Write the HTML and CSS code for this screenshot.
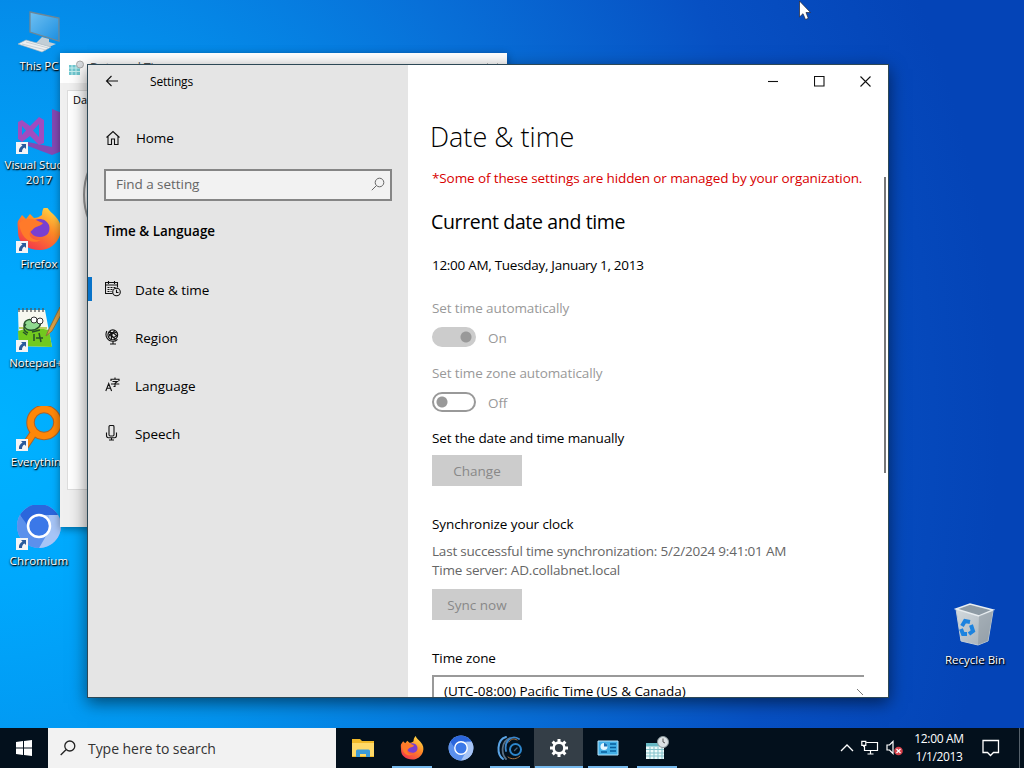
FILE: index.html
```html
<!DOCTYPE html>
<html lang="en">
<head>
<meta charset="utf-8">
<title>Settings</title>
<link rel="stylesheet" href="styles.css">
</head>
<body>
<svg class="defs" width="0" height="0">
  <defs>
    <linearGradient id="fox" x1="0.8" y1="0" x2="0.2" y2="1"><stop offset="0" stop-color="#ffe14a"/><stop offset=".45" stop-color="#ff8a26"/><stop offset="1" stop-color="#f2304e"/></linearGradient>
    <linearGradient id="screen" x1="0" y1="0" x2="1" y2="1"><stop offset="0" stop-color="#6fc0f2"/><stop offset="1" stop-color="#1c8fe0"/></linearGradient>
    <linearGradient id="bin" x1="0" y1="0" x2="1" y2="1"><stop offset="0" stop-color="#d3dade"/><stop offset="1" stop-color="#a3adb6"/></linearGradient>
    <symbol id="shortcut" viewBox="0 0 12 12"><path d="M0 0h12v12H0z" fill="#f4f4f6"/><path d="M5 2h5v5L8.500 5.500C6.500 6.500 6 8 6 10H3C2.500 7 4 5 6.500 3.500z" fill="#2a5a9c"/></symbol>
    <symbol id="firefox" viewBox="0 0 46 46">
      <path d="M2 16 6 10l4 4 4-5 4 4c3 0 5-1 8-3 0-4 1-7 4-10 2 5 5 7 9 11 6 6 7 13 5 19-3 9-11 15-20 15C11 45 2 38 2 27c0-5-1-8 0-11z" fill="url(#fox)"/>
      <path d="M16 17c5-5 14-4 17 3 2 7-2 12-9 12-7 0-11-5-10-9l5-2z" fill="#7a3fd0"/>
      <path d="M3 18c5-4 11-5 17-3 2 1 4 2 7 3-2 3-5 3-7 4-3 1-3 3-6 5-2 5 4 9 11 8-9 5-20 0-22-17z" fill="#ff7a2a"/>
    </symbol>
    <symbol id="chromium" viewBox="0 0 46 46">
      <circle cx="23" cy="23" r="22" fill="#8ab2f4"/>
      <path d="M4 12A22 22 0 0 1 42 12H23L13 28z" fill="#2b66dc"/>
      <path d="M42 12A22 22 0 0 1 23 45L33 28V12z" fill="#a6c4f6"/>
      <path d="M4 12A22 22 0 0 0 23 45l8-14-16-4z" fill="#5b90ec"/>
      <circle cx="23" cy="23" r="11" fill="#3b78e8" stroke="#fff" stroke-width="2.500"/>
    </symbol>
  </defs>
</svg>
<main class="desktop">
  <div class="icons">
    <div class="shortcut">
      <svg width="46" height="46" viewBox="0 0 46 46"><path d="m14 2 29 6v23L14 22z" fill="url(#screen)" stroke="#6d8797" stroke-width="1.300"/><path d="m26 27 7 2v3l7 2-7 3-13-4z" fill="#c2ced6"/><path d="m2 34 8-4 25 7-9 5z" fill="#eceff1" stroke="#a8b3bb" stroke-width=".6"/><path d="m6 34 24 6M10 32l22 6" stroke="#b9c3ca" stroke-width=".7"/></svg>
      <span>This PC</span>
    </div>
    <div class="shortcut">
      <svg width="46" height="46" viewBox="0 0 46 46"><path d="m36 0 10 4v38l-10 4-24-9v-4l24 5z" fill="#8449b4"/><path d="m2 13 4-2 8 6 9-9 5 3v23l-5 2-9-9-8 6-4-3zm4 4v9l4-4.500zm17-2-6 6.500 6 6.500z" fill="#a04cc0" fill-rule="evenodd"/><use href="#shortcut" y="33" width="12" height="12"/></svg>
      <span>Visual Studio<br>2017</span>
    </div>
    <div class="shortcut">
      <svg width="46" height="46" viewBox="0 0 46 46"><use href="#firefox" y="-3" width="46" height="46"/><use href="#shortcut" y="33" width="12" height="12"/></svg>
      <span>Firefox</span>
    </div>
    <div class="shortcut">
      <svg width="46" height="46" viewBox="0 0 46 46"><path d="M2 3h27l7 37-33-1z" fill="#f7f8ef"/><path d="M2 24c10-3 20-3 31-1l3 17-33-1z" fill="#72c91f"/><path d="M3 21h28" stroke="#b9d15e" stroke-width="2"/><path d="M3 1v4m4-4v4m4-4v4m4-4v4m4-4v4m4-4v4m4-4v4" stroke="#555" stroke-width="1.300"/><path d="M44 0 33 22l-3 7 6-5L46 6z" fill="#d9a045" stroke="#8b7140"/><path d="M8 19c0-7 7-8 10-4 5-3 8 2 5 5-4 4-12 5-15-1z" fill="#8fd98f" stroke="#27522a" stroke-width="1.500"/><path d="M12 26c-5-2-5-6-2-9m6 8 8-2m-6 4v7m5-8 2 9m-5-4h7m-20-6 4 3" fill="none" stroke="#27522a" stroke-width="1.500"/><circle cx="18" cy="13" r="3" fill="#fff" stroke="#333"/><circle cx="24" cy="14" r="3" fill="#fff" stroke="#333"/><use href="#shortcut" y="33" width="12" height="12"/></svg>
      <span>Notepad++</span>
    </div>
    <div class="shortcut">
      <svg width="46" height="46" viewBox="0 0 46 46"><g fill="none"><path d="M17 28 9 40" stroke="#a9632c" stroke-width="8"/><circle cx="28" cy="16.500" r="13.500" stroke="#a9632c" stroke-width="8.500"/><path d="M17 28 9 40" stroke="#ff8708" stroke-width="6"/><circle cx="28" cy="16.500" r="13.500" stroke="#ff8708" stroke-width="6.500"/></g><use href="#shortcut" y="33" width="12" height="12"/></svg>
      <span>Everything</span>
    </div>
    <div class="shortcut">
      <svg width="46" height="46" viewBox="0 0 46 46"><use href="#chromium" y="-2" width="46" height="46"/><use href="#shortcut" y="33" width="12" height="12"/></svg>
      <span class="wide">Chromium</span>
    </div>
  </div>
  <div class="shortcut recycle">
    <svg width="46" height="46" viewBox="0 0 46 46"><path d="M4 7 41 9l-5 30-10 4-17-4z" fill="url(#bin)" stroke="#c3ced6"/><path d="m4 7 14-5 23 6-14 6z" fill="#8e9ba5" stroke="#e8edf0" stroke-width="1.500"/><path d="m27 14 14-5-5 30-10 4z" fill="#7b8792" opacity=".4"/><g fill="none" stroke="#1d83df" stroke-width="4"><path d="m10 24 3-5 5 1"/><path d="m19 23 2 6-4 3"/><path d="M15 32h-4l-2-5"/></g></svg>
    <span>Recycle Bin</span>
  </div>

  <section class="back-window">
    <header><svg width="16" height="16" viewBox="0 0 16 16"><path d="M1 5h11v10H1z" fill="#6fc6cf"/><path d="M1 8h11M1 11.500h11M4 5v10m4-10v10" stroke="#c5eeee"/><circle cx="12" cy="4.500" r="3.500" fill="#d8dce0" stroke="#aaa"/></svg><b>Date and Time</b><svg class="x" width="11" height="11" viewBox="0 0 11 11"><path d="m.5.500 10 10m0-10-10 10" stroke="#777"/></svg></header>
    <div class="sheet"><span>Date and Time</span><div class="dial"></div></div>
  </section>

  <section class="settings">
    <aside>
      <div class="titlebar">
        <svg width="14" height="12" viewBox="0 0 14 12"><path d="M13 6H1.500M6.500 1l-5 5 5 5" class="line"/></svg>
        <span>Settings</span>
      </div>
      <div class="home">
        <svg width="16" height="16" viewBox="0 0 16 16"><path d="m1.500 7.500 6.500-6 6.500 6M3 6.500v8h3.500V9h3v5.500H13v-8" class="line"/></svg>
        <span>Home</span>
      </div>
      <div class="find"><span>Find a setting</span><svg width="14" height="14" viewBox="0 0 14 14"><circle cx="8.500" cy="5.500" r="4.300" fill="none" stroke="#666"/><path d="M5.500 8.500.8 13.200" stroke="#666"/></svg></div>
      <h3>Time &amp; Language</h3>
      <nav>
        <a class="active"><svg width="16" height="16" viewBox="0 0 16 16"><path d="M7.500 12.500H.5v-11h12v5M.5 4h12M3.500 0v3m6-3v3" class="line"/><path d="M2.500 6.500h2m1 0h2m1 0h2m-8 2h2m1 0h2m-5 2h2m1 0h1" class="line"/><circle cx="11.500" cy="11" r="3.800" class="line"/><path d="M11.500 8.800v2.700h2" class="line"/></svg><span>Date &amp; time</span></a>
        <a><svg width="16" height="16" viewBox="0 0 16 16"><circle cx="7.800" cy="5.800" r="4.900" class="line"/><path d="M3.500 4.500c4 5 6 5 9 1M3.500 8c2-4 5-6 8.500-4M5 2c1 4 3 7 6 8M10 1.500C7 4 6 7 6.500 10M4 3.500c3-.5 6 1 8 4M1.800 2C-.5 7 2.500 12.300 8 12.300c2 0 3.500-.8 4.500-2M8 12.300v2.400M5 15h6" class="line"/></svg><span>Region</span></a>
        <a><svg width="16" height="16" viewBox="0 0 16 16"><path d="m.8 14 2.900-7.500 2.900 7.500M1.800 11.300h4M6 4V2.300h8V4M10 .5v1.800M7.500 4.500h4.800L10 6.300v3.200H8.500M6 7h8.300" class="line"/></svg><span>Language</span></a>
        <a><svg width="16" height="16" viewBox="0 0 16 16"><rect x="4" y=".5" width="5" height="10.500" rx="1.200" class="line"/><path d="M1.500 7.500v3q0 2.200 2 2.200h6q2 0 2-2.200v-3M6.500 12.700v2.300M4 15h5" class="line"/></svg><span>Speech</span></a>
      </nav>
    </aside>
    <article>
      <div class="controls">
        <svg width="11" height="11" viewBox="0 0 11 11"><path d="M0 5.500h10" class="line"/></svg>
        <svg width="11" height="11" viewBox="0 0 11 11"><path d="M.5.500h9.500v9.500H.5z" class="line"/></svg>
        <svg width="11" height="11" viewBox="0 0 11 11"><path d="m.5.500 10 10m0-10-10 10" class="line"/></svg>
      </div>
      <h1>Date &amp; time</h1>
      <p class="warning">*Some of these settings are hidden or managed by your organization.</p>
      <div class="view">
        <div class="fields">
          <h2>Current date and time</h2>
          <p class="now">12:00 AM, Tuesday, January 1, 2013</p>
          <p class="muted auto">Set time automatically</p>
          <div class="toggle on"><i></i><span>On</span></div>
          <p class="muted zone">Set time zone automatically</p>
          <div class="toggle"><i></i><span>Off</span></div>
          <p class="manual">Set the date and time manually</p>
          <button disabled>Change</button>
          <p class="sync">Synchronize your clock</p>
          <p class="gray last">Last successful time synchronization: 5/2/2024 9:41:01 AM</p>
          <p class="gray server">Time server: AD.collabnet.local</p>
          <button disabled>Sync now</button>
          <p class="tz">Time zone</p>
          <div class="select"><span>(UTC-08:00) Pacific Time (US &amp; Canada)</span><svg width="9" height="8" viewBox="0 0 9 8"><path d="m2 1 6 6" stroke="#777"/></svg></div>
        </div>
        <div class="scrollbar"></div>
      </div>
    </article>
  </section>
  <svg class="cursor" width="14" height="22" viewBox="0 0 14 22"><path d="M1.500 1v16l3.500-3.300L7.500 19.500l2.800-1.200L8 12.500h4.500z" fill="#fff" stroke="#223" stroke-width=".7"/></svg>
</main>
<footer class="taskbar">
  <div class="start"><svg width="16" height="16" viewBox="0 0 16 16"><path d="m0 2 7-1v6.500H0zm8-1.100L16 0v7.500H8zM0 8.500h7V15l-7-1zm8 0h8V16l-8-1z" fill="#fff"/></svg></div>
  <div class="search"><svg width="16" height="16" viewBox="0 0 16 16"><circle cx="9.800" cy="6" r="5" fill="none" stroke="#222" stroke-width="1.300"/><path d="M6 9.700.7 15" stroke="#222" stroke-width="1.300"/></svg><span>Type here to search</span></div>
  <div class="apps">
    <div><svg width="24" height="24" viewBox="0 0 24 24"><path d="M1 3h8l2 2h12v16H1z" fill="#f1b929"/><path d="M1 7h22v13H1z" fill="#ffd968"/><path d="M5 21v-6q0-1.500 1.500-1.500h11q1.500 0 1.500 1.500v6h-4v-3H9v3z" fill="#3d9bd8"/></svg></div>
    <div class="run"><svg width="24" height="24"><use href="#firefox" width="24" height="24"/></svg></div>
    <div><svg width="26" height="26"><use href="#chromium" width="26" height="26"/></svg></div>
    <div class="run"><svg width="26" height="26" viewBox="0 0 26 26"><g fill="none" stroke-linecap="round"><path d="M9 2C-1 5 0 20 6 24" stroke="#5ba5e6" stroke-width="2"/><path d="M13 3C4 6 4 19 9 24" stroke="#5a6f82" stroke-width="1.800"/><path d="M22 4C14-1 7 7 9 16" stroke="#3c87cc" stroke-width="1.800"/><circle cx="18.500" cy="14.500" r="5.500" stroke="#2d86cc" stroke-width="2"/><path d="m17.500 15.500 2.500-2.500" stroke="#41607e" stroke-width="1.300"/><path d="M11 22c4 3 9 2 12-1M12 7c2-3 5-4 8-2" stroke="#a47446"/></g></svg></div>
    <div class="run current"><svg width="20" height="20" viewBox="0 0 20 20"><circle cx="10" cy="10" r="5.400" fill="none" stroke="#fff" stroke-width="2.600"/><path d="M10 1v3.500m0 11V19M1 10h3.500m11 0H19M3.600 3.600 6.100 6.100m7.800 7.800 2.500 2.500m0-12.800-2.500 2.500m-7.800 7.800-2.500 2.500" stroke="#fff" stroke-width="3"/></svg></div>
    <div class="run"><svg width="22" height="18" viewBox="0 0 22 18"><path d="M1 2h20v14H1z" fill="#42afe7" stroke="#b5e4fb"/><circle cx="7" cy="7.500" r="3.500" fill="#e4f6ff"/><path d="M7 7.500V4a3.500 3.500 0 0 1 3.500 3.500z" fill="#1970b5"/><path d="M13 5h6m-6 3.500h6M4 13h6m3-1h6" stroke="#075e9c" stroke-width="1.600"/></svg></div>
    <div class="run"><svg width="24" height="24" viewBox="0 0 24 24"><path d="M1 7h18v16H1z" fill="#eefafa"/><path d="M1 7h18v3.500H1z" fill="#67b9c5"/><path d="M5 11v12m4-12v12m4-12v12m4-12v12M1 13.500h18M1 17h18M1 20h18" stroke="#83c2cb"/><circle cx="18" cy="6" r="5.500" fill="#dce2e5" stroke="#8c999e"/><path d="M18 2.500V6l2 1" fill="none" stroke="#555"/></svg></div>
  </div>
  <div class="tray">
    <svg width="14" height="14" viewBox="0 0 14 14"><path d="m1 10 6-6 6 6" fill="none" stroke="#fff" stroke-width="1.300"/></svg>
    <svg width="18" height="16" viewBox="0 0 18 16"><path d="M5.500 2.500h11v8h-13V6M.8 1.300h4v4h-4zM2.800 5.500V7M9.500 10.500v3M6.500 14h6" fill="none" stroke="#fff" stroke-width="1.200"/></svg>
    <svg width="18" height="16" viewBox="0 0 18 16"><path d="M1 5h2.500L7 1.500v12L3.500 10H1z" fill="none" stroke="#fff" stroke-width="1.200"/><circle cx="12.500" cy="11" r="4.300" fill="#d7404a"/><path d="m10.500 9 4 4m0-4-4 4" stroke="#fff" stroke-width="1.200"/></svg>
    <div class="clock"><span>12:00 AM</span><span>1/1/2013</span></div>
    <svg width="18" height="18" viewBox="0 0 18 18"><path d="M1 1.500h15.500v12h-5l-3 3-3-3H1z" fill="none" stroke="#fff" stroke-width="1.300"/></svg>
    <div class="peek"></div>
  </div>
</footer>
</body>
</html>
```
FILE: styles.css
```css
* { box-sizing: border-box; }
body { margin: 0; width: 1024px; height: 768px; overflow: hidden; display: flex; flex-direction: column; font-family: "Open Sans", "Noto Sans", sans-serif; font-size: 13.5px; color: #000; }
h1, h2, h3, p { margin: 0; font-weight: 400; white-space: nowrap; }
svg { flex: none; display: block; }
.defs { position: absolute; }
.line { fill: none; stroke: #111; stroke-width: 1.1; }
.desktop { position: relative; height: 728px; flex: none; background: radial-gradient(ellipse 1000px 1100px at 0 430px, #00b2ff 0, #00a8fd 14%, #0393ee 34%, #0870d8 57%, #0750c3 80%, #0444b7 100%); overflow: hidden; }
.icons { display: grid; grid-template-rows: repeat(6, 99px); width: 78px; padding-top: 10px; }
.shortcut { display: flex; flex-direction: column; align-items: center; gap: 2px; width: 78px; color: #fff; font-size: 11.5px; line-height: 15px; text-align: center; text-shadow: 0 1px 2px #000, 1px 1px 1px #000; white-space: nowrap; }
.shortcut .wide { letter-spacing: .2px; }
.recycle { position: absolute; left: 936px; top: 602px; }
.recycle span { margin-top: 2px; }
.back-window { position: absolute; left: 60px; top: 53px; width: 447px; height: 474px; background: #f0f0f0; box-shadow: 0 2px 8px #0006; font-size: 11px; }
.back-window header { display: flex; align-items: center; gap: 6px; height: 30px; padding: 0 9px 0 8px; background: #fff; color: #555; }
.back-window b { font-weight: 400; font-size: 12px; line-height: 16px; padding-bottom: 1px; }
.back-window .x { margin-left: auto; }
.sheet { margin: 7px 7px 0; height: 400px; background: #fff; border: 1px solid #ddd; padding: 1px 5px; }
.dial { width: 130px; height: 130px; margin: 23px 0 0 10px; border: 2px solid #999; border-radius: 50%; }
.settings { position: absolute; left: 87px; top: 64px; width: 802px; height: 634px; border: 1px solid #2d4856; display: flex; background: #fff; box-shadow: 0 5px 16px #0008; }
aside { width: 320px; background: #e5e5e5; }
.titlebar { height: 32px; display: flex; align-items: center; gap: 31px; padding-left: 17px; font-size: 12px; letter-spacing: -.2px; }
.home { display: flex; align-items: center; gap: 15px; height: 46px; margin-top: 18px; padding-left: 17px; letter-spacing: -.1px; }
.find { display: flex; align-items: center; justify-content: space-between; height: 32px; margin: 8px 16px 0; padding: 0 5px 2px 10px; border: 2px solid #858585; background: #f2f2f2; color: #666; letter-spacing: -.05px; }
aside h3 { margin: 18px 16px 0; line-height: 24px; font-weight: 600; font-size: 13.4px; }
nav { margin-top: 23px; letter-spacing: -.05px; }
nav a { display: flex; align-items: center; height: 48px; gap: 14px; padding-left: 17px; }
nav svg { margin-top: -2px; }
nav .active { background: linear-gradient(#0873c9, #0873c9) 0 11px / 4px 24px no-repeat; }
article { flex: 1; display: flex; flex-direction: column; min-width: 0; overflow: hidden; }
.controls { display: flex; justify-content: flex-end; gap: 35px; padding: 11px 17px 0 0; height: 32px; }
h1 { height: 44px; margin: 18px 0 0 22px; font-size: 27px; line-height: 44px; font-weight: 350; letter-spacing: 0; }
.warning { margin: 8px 0 0 24px; line-height: 22px; color: #d80000; letter-spacing: -.11px; }
.view { flex: 1; display: flex; min-height: 0; margin-top: -12px; overflow: hidden; }
.fields { width: 432px; margin-left: 24px; padding-top: 30px; }
.view p { line-height: 20px; }
h2 { font-size: 19.5px; line-height: 30px; margin-left: -1px; letter-spacing: -.35px; }
.view .now { margin-top: 18px; letter-spacing: -.29px; }
.view .auto { margin-top: 23px; }
.muted, .toggle { color: #999; letter-spacing: -.11px; }
.toggle { display: flex; align-items: center; gap: 12px; height: 20px; margin-top: 9px; }
.toggle span { padding-top: 1px; }
.toggle i { width: 44px; height: 20px; border: 2px solid #999; border-radius: 10px; background: radial-gradient(circle at 8px 8px, #999 5px, transparent 6px); }
.toggle.on i { border-color: #ccc; background: radial-gradient(circle at 32px 8px, #999 5px, #ccc 6px); }
.view .zone { margin-top: 16px; }
.view .manual { margin-top: 16px; letter-spacing: -.13px; }
button { display: block; width: 90px; height: 31px; margin-top: 7px; border: 0; padding: 0; background: #ccc; color: #888; font: inherit; }
.view .sync { margin-top: 28px; letter-spacing: -.1px; }
.gray { color: #666; }
.view .last { margin-top: 7px; letter-spacing: -.2px; }
.view .server { margin-top: -1px; letter-spacing: -.16px; }
.server + button { margin-top: 9px; }
.view .tz { margin-top: 28px; letter-spacing: -.1px; }
.select { display: flex; height: 32px; margin-top: 7px; padding: 4px 0 0 10px; border: 2px solid #999; border-right: 0; justify-content: space-between; line-height: 20px; letter-spacing: -.05px; }
.select svg { margin-top: 7px; }
.scrollbar { margin: 0 2px 0 auto; width: 2px; height: 296px; background: #777; }
.cursor { position: absolute; left: 798px; top: 0; }
.taskbar { display: flex; height: 40px; background: #03101c; color: #fff; }
.start { width: 48px; display: grid; place-items: center; }
.search { width: 288px; display: flex; align-items: center; gap: 12px; padding-left: 12px; background: #f2f2f2; color: #333; font-size: 14px; letter-spacing: -.05px; }
.apps { display: flex; margin-left: 2px; }
.apps div { width: 49px; display: grid; place-items: center; }
.apps .run { background: linear-gradient(#76b9ed, #76b9ed) 50% 100% / 40px 2px no-repeat; }
.apps .current { background: linear-gradient(#76b9ed, #76b9ed) 50% 100% / 48px 2px no-repeat, #343e47; }
.tray { display: flex; align-items: center; margin-left: auto; gap: 7px; }
.clock { width: 66px; margin: 0 3px 0 -5px; font-size: 12px; line-height: 18px; text-align: center; display: flex; flex-direction: column; letter-spacing: -.35px; }
.peek { width: 5px; height: 40px; margin-left: 12px; border-left: 1px solid #56616b; }
```
